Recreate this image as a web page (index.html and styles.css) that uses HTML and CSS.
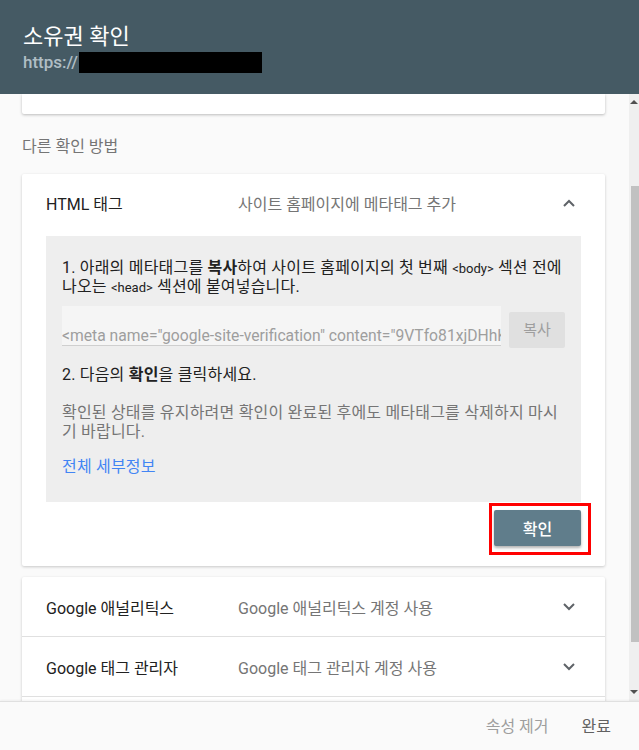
FILE: index.html
```html
<!DOCTYPE html>
<html lang="ko">
<head>
  <meta charset="utf-8">
  <title>소유권 확인</title>
  <link rel="stylesheet" href="styles.css">
</head>
<body>

  <div class='dialog'>

    <div class='dialogHeader'>
      <h1 class='dialogTitle'>소유권 확인</h1>
      <div class='siteUrl'>https://<span class='redacted'></span></div>
    </div>

    <div class='dialogMain'>
      <div class='scrollArea'>

        <div class='cardStub'></div>

        <p class='sectionLabel'>다른 확인 방법</p>

        <div class='card'>
          <div class='methodRow openRow'>
            <span class='methodName'>HTML 태그</span>
            <span class='methodDesc'>사이트 홈페이지에 메타태그 추가</span>
            <svg class='chevron' width="12" height="8" viewBox="0 0 12 8"><path d="M1 7 L6 2 L11 7" fill="none" stroke="#5f6368" stroke-width="2"/></svg>
          </div>

          <div class='methodBody'>
            <div class='panel'>
              <p class='step stepOne'>1. 아래의 메타태그를 <b>복사</b>하여 사이트 홈페이지의 첫 번째 <span class='code'>&lt;body&gt;</span> 섹션 전에 나오는 <span class='code'>&lt;head&gt;</span> 섹션에 붙여넣습니다.</p>

              <div class='copyRow'>
                <div class='metaInput'>&lt;meta name="google-site-verification" content="9VTfo81xjDHhK</div>
                <button type='button' class='copyBtn'>복사</button>
              </div>

              <p class='step stepTwo'>2. 다음의 <b>확인</b>을 클릭하세요.</p>

              <p class='note'>확인된 상태를 유지하려면 확인이 완료된 후에도 메타태그를 삭제하지 마시기 바랍니다.</p>

              <a class='detailsLink' href="#">전체 세부정보</a>
            </div>
          </div>

          <div class='cardActions'>
            <div class='highlight'>
              <button type='button' class='confirmBtn'>확인</button>
            </div>
          </div>
        </div>

        <div class='card otherMethods'>
          <div class='methodRow shortRow'>
            <span class='methodName'>Google 애널리틱스</span>
            <span class='methodDesc'>Google 애널리틱스 계정 사용</span>
            <svg class='chevron' width="12" height="8" viewBox="0 0 12 8"><path d="M1 1 L6 6 L11 1" fill="none" stroke="#5f6368" stroke-width="2"/></svg>
          </div>
          <div class='methodRow shortRow'>
            <span class='methodName'>Google 태그 관리자</span>
            <span class='methodDesc'>Google 태그 관리자 계정 사용</span>
            <svg class='chevron' width="12" height="8" viewBox="0 0 12 8"><path d="M1 1 L6 6 L11 1" fill="none" stroke="#5f6368" stroke-width="2"/></svg>
          </div>
          <div class='methodRow shortRow'></div>
        </div>

      </div>

      <div class='scrollbar'>
        <div class='arrowUp'></div>
        <div class='thumbTrack'><div class='thumb'></div></div>
        <div class='arrowDown'></div>
      </div>
    </div>

    <div class='dialogFooter'>
      <button type='button' class='textBtn muted'>속성 제거</button>
      <button type='button' class='textBtn'>완료</button>
    </div>

  </div>

</body>
</html>
```

FILE: styles.css
```css
* {
  box-sizing: border-box;
}

body {
  margin: 0;
  font-family: Roboto, "Noto Sans CJK KR", sans-serif;
  font-size: 16px;
  color: #212121;
  background: #fafafa;
}

.dialog {
  display: flex;
  flex-direction: column;
  height: 750px;
  width: 639px;
  overflow: hidden;
}

.dialogHeader {
  height: 94px;
  flex-shrink: 0;
  background: #455a64;
  padding: 22px 23px 0 23px;
}

.dialogTitle {
  margin: 0;
  font-size: 22px;
  font-weight: 400;
  line-height: 30px;
  color: white;
}

.siteUrl {
  display: flex;
  align-items: center;
  font-size: 17px;
  font-weight: 500;
  line-height: 21px;
  color: #b0bec5;
}

.redacted {
  display: inline-block;
  width: 183px;
  height: 21px;
  background: black;
  margin-left: 1px;
}

.dialogMain {
  display: flex;
  height: 607px;
  flex-shrink: 0;
}

.scrollArea {
  flex: 1;
  overflow: hidden;
  padding: 0 24px 0 22px;
}

.cardStub {
  height: 20px;
  background: white;
  border-radius: 0 0 2px 2px;
  box-shadow: 0 1px 3px rgba(0, 0, 0, 0.25);
}

.sectionLabel {
  margin: 23px 0 17px 0;
  line-height: 20px;
  color: #757575;
}

.card {
  background: white;
  border-radius: 2px;
  box-shadow: 0 1px 3px rgba(0, 0, 0, 0.2);
}

.methodRow {
  display: flex;
  align-items: center;
  height: 62px;
  padding: 0 30px 0 24px;
}

.openRow {
  padding-bottom: 5px;
}

.methodName {
  width: 192px;
  flex-shrink: 0;
  color: #212121;
}

.methodDesc {
  flex: 1;
  color: #757575;
}

.chevron {
  flex-shrink: 0;
}

.methodBody {
  padding: 0 24px;
}

.panel {
  background: #eeeeee;
  padding: 22px 16px 26px 16px;
  letter-spacing: 0.2px;
}

.panel p {
  margin: 0;
  line-height: 19px;
}

.stepOne {
  word-break: keep-all;
}

.step b {
  font-weight: 700;
}

.code {
  font-size: 13px;
  line-height: 1;
  letter-spacing: 0;
}

.copyRow {
  display: flex;
  align-items: flex-start;
  margin-top: 10px;
}

.metaInput {
  width: 439px;
  height: 40px;
  padding-top: 20px;
  line-height: 20px;
  font-size: 15.7px;
  letter-spacing: 0;
  color: #9e9e9e;
  background: #f5f5f5;
  border-bottom: 1px solid #cfcfcf;
  white-space: nowrap;
  overflow: hidden;
}

.copyBtn {
  margin: 6px 0 0 8px;
  width: 56px;
  height: 36px;
  border: none;
  border-radius: 2px;
  background: #e0e0e0;
  color: #9e9e9e;
  font-family: inherit;
  font-size: 15px;
  padding: 0 0 3px 0;
}

.stepTwo {
  margin-top: 17px !important;
}

.note {
  margin-top: 19px !important;
  color: #757575;
}

.detailsLink {
  display: block;
  margin-top: 16px;
  line-height: 19px;
  color: #4285f4;
  text-decoration: none;
}

.cardActions {
  display: flex;
  justify-content: flex-end;
  padding: 8px 24px 20px 24px;
}

.highlight {
  position: relative;
}

.highlight::after {
  content: "";
  position: absolute;
  top: -7px;
  bottom: -9px;
  left: -5px;
  right: -10px;
  border: 3px solid #ff0000;
}

.confirmBtn {
  display: block;
  width: 87px;
  height: 36px;
  border: none;
  border-radius: 2px;
  background: #607d8b;
  color: white;
  font-family: inherit;
  font-size: 16px;
  font-weight: 500;
  box-shadow: 0 2px 3px rgba(0, 0, 0, 0.3);
}

.otherMethods {
  margin-top: 11px;
}

.shortRow {
  height: 60px;
  border-bottom: 1px solid #e0e0e0;
}

.scrollbar {
  width: 10px;
  flex-shrink: 0;
  background: #efefef;
  display: flex;
  flex-direction: column;
  align-items: flex-end;
}

.arrowUp, .arrowDown {
  width: 0;
  height: 0;
  margin: 6px 1px 0 0;
  border-left: 4px solid transparent;
  border-right: 4px solid transparent;
}

.arrowUp {
  border-bottom: 4px solid #505050;
}

.arrowDown {
  margin: 0 1px 8px 0;
  border-top: 4px solid #505050;
}

.thumbTrack {
  flex: 1;
  width: 8px;
  padding-top: 82px;
  padding-bottom: 48px;
}

.thumb {
  height: 456px;
  background: #c1c1c1;
}

.dialogFooter {
  flex: 1;
  display: flex;
  justify-content: flex-end;
  align-items: center;
  gap: 7px;
  padding: 0 16px 2px 0;
  background: #fafafa;
  border-top: 1px solid #e0e0e0;
  box-shadow: 0 -1px 2px rgba(0, 0, 0, 0.05);
  position: relative;
}

.textBtn {
  border: none;
  background: none;
  font-family: inherit;
  font-size: 16px;
  color: #616161;
  padding: 8px 12px;
}

.textBtn.muted {
  color: #9e9e9e;
  margin-right: 2px;
}
```
